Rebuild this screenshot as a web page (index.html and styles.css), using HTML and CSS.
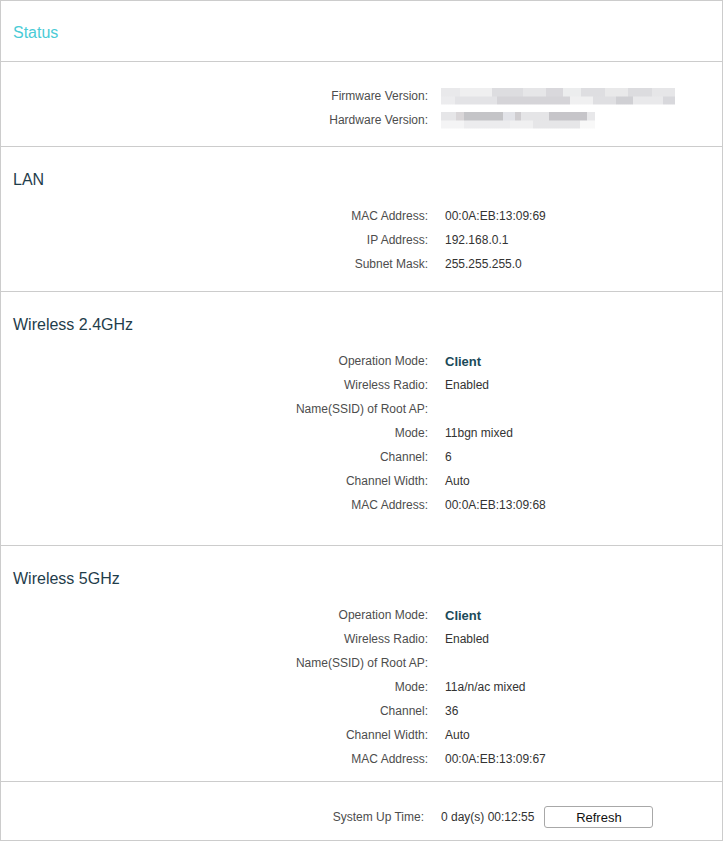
FILE: index.html
```html
<!DOCTYPE html>
<html>
<head>
    <title>Status</title>
    <meta charset="utf-8">
    <link rel="stylesheet" href="styles.css">
</head>
<body>

    <div class="panel">

        <div class="section head">
            <h2 class="status-title">Status</h2>
        </div>

        <!--版本資訊-->
        <div class="section firmware">
            <div class="row fw-row">
                <span class="label">Firmware Version:</span>
                <span class="value"><span class="blur blur-fw"></span></span>
            </div>
            <div class="row fw-row">
                <span class="label">Hardware Version:</span>
                <span class="value"><span class="blur blur-hw"></span></span>
            </div>
        </div>

        <div class="section lan">
            <h3 class="title">LAN</h3>
            <div class="row"><span class="label">MAC Address:</span><span class="value">00:0A:EB:13:09:69</span></div>
            <div class="row"><span class="label">IP Address:</span><span class="value">192.168.0.1</span></div>
            <div class="row"><span class="label">Subnet Mask:</span><span class="value">255.255.255.0</span></div>
        </div>

        <div class="section wl24">
            <h3 class="title">Wireless 2.4GHz</h3>
            <div class="row"><span class="label">Operation Mode:</span><span class="value strong">Client</span></div>
            <div class="row"><span class="label">Wireless Radio:</span><span class="value">Enabled</span></div>
            <div class="row"><span class="label">Name(SSID) of Root AP:</span><span class="value"></span></div>
            <div class="row"><span class="label">Mode:</span><span class="value">11bgn mixed</span></div>
            <div class="row"><span class="label">Channel:</span><span class="value">6</span></div>
            <div class="row"><span class="label">Channel Width:</span><span class="value">Auto</span></div>
            <div class="row"><span class="label">MAC Address:</span><span class="value">00:0A:EB:13:09:68</span></div>
        </div>

        <div class="section wl5">
            <h3 class="title">Wireless 5GHz</h3>
            <div class="row"><span class="label">Operation Mode:</span><span class="value strong">Client</span></div>
            <div class="row"><span class="label">Wireless Radio:</span><span class="value">Enabled</span></div>
            <div class="row"><span class="label">Name(SSID) of Root AP:</span><span class="value"></span></div>
            <div class="row"><span class="label">Mode:</span><span class="value">11a/n/ac mixed</span></div>
            <div class="row"><span class="label">Channel:</span><span class="value">36</span></div>
            <div class="row"><span class="label">Channel Width:</span><span class="value">Auto</span></div>
            <div class="row"><span class="label">MAC Address:</span><span class="value">00:0A:EB:13:09:67</span></div>
        </div>

        <div class="section uptime">
            <div class="row up-row">
                <span class="label">System Up Time:</span>
                <span class="value">0 day(s) 00:12:55</span>
                <input type="button" class="btn" value="Refresh">
            </div>
        </div>

    </div>

</body>
</html>
```

FILE: styles.css
```css
html, body {
    height: 100%;
}

body {
    margin: 0;
    background: #ffffff;
    font-family: "Liberation Sans", Arial, sans-serif;
    font-size: 12px;
    color: #333333;
}

.panel {
    border: 1px solid #cccccc;
    height: 841px;
    box-sizing: border-box;
    display: flex;
    flex-direction: column;
}

.section {
    border-top: 1px solid #cccccc;
    padding: 23px 0 15px;
}

.section:first-child {
    border-top: 0;
}

/*標題*/
.head {
    height: 60px;
    padding: 4px 12px 0;
    box-sizing: border-box;
    display: flex;
    align-items: center;
}

.status-title {
    margin: 0;
    font-size: 16px;
    font-weight: normal;
    line-height: 20px;
    color: #4acbd6;
}

.title {
    margin: 0 12px 14px;
    font-size: 16px;
    font-weight: normal;
    line-height: 20px;
    color: #1f3d4b;
}

.row {
    display: flex;
    align-items: center;
    height: 24px;
}

.label {
    width: 427px;
    flex: none;
    text-align: right;
    color: #4d4d4d;
}

.value {
    margin-left: 17px;
    color: #333333;
}

.strong {
    font-size: 13px;
    font-weight: bold;
    color: #1b4a59;
}

/*各區塊間距*/
.firmware {
    padding: 22px 0 14px;
}

.fw-row .value {
    margin-left: 13px;
    display: flex;
}

.lan {
    padding-bottom: 15px;
}

.wl24 {
    padding-bottom: 28px;
}

.wl5 {
    padding-bottom: 10px;
}

.uptime {
    flex: 1;
    padding: 24px 0 0;
}

.up-row {
    height: 22px;
}

.up-row .label {
    width: 423px;
}

.up-row .value {
    margin-left: 17px;
}

.btn {
    margin-left: 10px;
    width: 109px;
    height: 22px;
    padding: 0;
    border: 1px solid #a8a8a8;
    border-radius: 3px;
    background: #ffffff;
    font-family: "Liberation Sans", Arial, sans-serif;
    font-size: 13px;
    color: #111111;
    cursor: pointer;
}

.btn:hover {
    background: #f2f2f2;
}

/*模糊處理的版本號*/
.blur {
    display: block;
    height: 17px;
}

.blur-fw {
    width: 234px;
    background:
        linear-gradient(90deg,
            #e9e9eb 0 8%, #efeff0 8% 22%, #dddde0 22% 35%, #e6e6e8 35% 45%,
            #d9d8dc 45% 52%, #ecedee 52% 60%, #dedee1 60% 70%, #e9e9ea 70% 80%,
            #dcdcdf 80% 90%, #e6e6e8 90% 100%) top / 100% 50% no-repeat,
        linear-gradient(90deg,
            #ececee 0 6%, #e3e3e6 6% 24%, #d5d4d8 24% 55%, #f0f0f1 55% 65%,
            #dfdfe2 65% 75%, #d0d0d4 75% 82%, #e9e9eb 82% 95%, #d8d8dc 95% 100%) bottom / 100% 50% no-repeat;
}

.blur-hw {
    width: 154px;
    background:
        linear-gradient(90deg,
            #e6e6e8 0 10%, #d9d6d8 10% 15%, #c4c4c7 15% 40%, #e2e3e8 40% 48%,
            #cfcdd0 48% 52%, #e5e5e7 52% 70%, #c6c5c9 70% 95%, #e8e8ea 95% 100%) top / 100% 50% no-repeat,
        linear-gradient(90deg,
            #f4f4f5 0 15%, #ececee 15% 45%, #f0f0f1 45% 60%, #e6e6e8 60% 90%,
            #f8f8f8 90% 100%) bottom / 100% 50% no-repeat;
}
```
